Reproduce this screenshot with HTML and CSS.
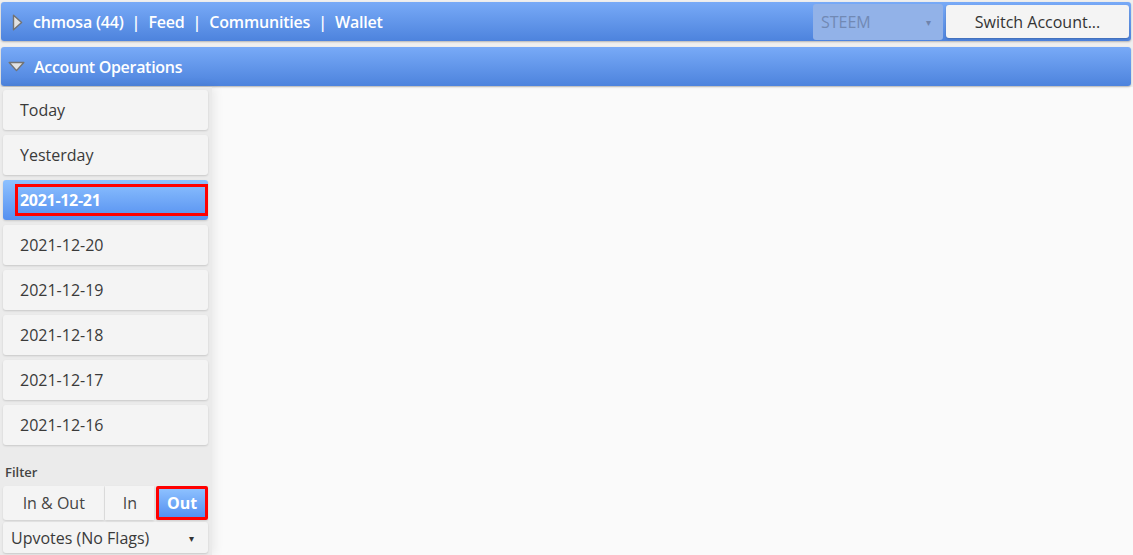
FILE: index.html
```html
<!DOCTYPE html>
<html>
<head>
<meta charset="utf-8">
<link rel="stylesheet" href="styles.css">
</head>
<body>
<div class="topwrap">
  <div class="bar bar-top">
    <div class="bar-left">
      <svg class="tri" width="11" height="17" viewBox="0 0 11 17"><path d="M1.5 1.2 L9.6 8.5 L1.5 15.8 Z" fill="#e2e2e2" stroke="#737373" stroke-width="1.4" stroke-linejoin="round"/></svg>
      <span class="nav">chmosa (44)</span><span class="sep">|</span><span class="nav">Feed</span><span class="sep">|</span><span class="nav">Communities</span><span class="sep">|</span><span class="nav">Wallet</span>
    </div>
    <div class="bar-right">
      <div class="chain"><span>STEEM</span><span class="chain-arrow">▾</span></div>
      <div class="switch">Switch Account...</div>
    </div>
  </div>
  <div class="bar bar-ops">
    <svg class="tri-down" width="17" height="11" viewBox="0 0 17 11"><path d="M1.2 1.5 L15.8 1.5 L8.5 9.6 Z" fill="#e2e2e2" stroke="#737373" stroke-width="1.4" stroke-linejoin="round"/></svg>
    <span class="nav">Account Operations</span>
  </div>
</div>
<div class="main">
  <div class="sidebar">
    <div class="days">
      <div class="day">Today</div>
      <div class="day">Yesterday</div>
      <div class="day day-sel"><span class="mark">2021-12-21</span></div>
      <div class="day">2021-12-20</div>
      <div class="day">2021-12-19</div>
      <div class="day">2021-12-18</div>
      <div class="day">2021-12-17</div>
      <div class="day">2021-12-16</div>
    </div>
    <div class="filter-label">Filter</div>
    <div class="seg">
      <div class="seg-btn seg-a">In &amp; Out</div>
      <div class="seg-btn seg-b">In</div>
      <div class="seg-btn seg-c seg-sel">Out</div>
    </div>
    <div class="select"><span>Upvotes (No Flags)</span><span class="sel-arrow">▾</span></div>
  </div>
  <div class="content"></div>
</div>
</body>
</html>
```
FILE: styles.css
```css
* { box-sizing: border-box; }
html, body { height: 100%; }
body {
  margin: 0;
  background: #fafafa;
  font-family: "Open Sans", "Noto Sans", sans-serif;
  color: #333;
  overflow: hidden;
}
.topwrap {
  background: #efefef;
  padding: 2px 2px 1px 1px;
}
.bar {
  height: 39px;
  border-radius: 3px;
  background: linear-gradient(#78aaf7, #4d83dd);
  box-shadow: 0 1px 2px rgba(0,0,0,0.25);
  display: flex;
  align-items: center;
  color: #fff;
  font-weight: 600;
  font-size: 16px;
}
.bar-top {
  justify-content: space-between;
  padding-left: 11px;
  padding-right: 2px;
}
.bar-left { display: flex; align-items: center; }
.tri { margin-right: 10px; margin-top: 1px; }
.nav { letter-spacing: -0.2px; }
.sep { margin: 0 8px; font-weight: 600; }
.bar-ops .nav { letter-spacing: -0.3px; }
.bar-right { display: flex; align-items: center; gap: 3px; height: 100%; }
.chain {
  width: 130px;
  height: 36px;
  background: #92b2e8;
  border-radius: 3px;
  display: flex;
  align-items: center;
  justify-content: space-between;
  padding: 0 12px 0 8px;
  color: #7189b4;
  font-weight: 400;
  font-size: 16px;
}
.chain-arrow { font-size: 10px; color: #6e83ad; }
.switch {
  width: 183px;
  height: 33px;
  background: #f4f4f4;
  border-radius: 3px;
  box-shadow: 0 1px 2px rgba(0,0,0,0.2);
  color: #333;
  font-weight: 400;
  font-size: 16px;
  display: flex;
  align-items: center;
  justify-content: center;
}
.bar-ops {
  margin-top: 6px;
  padding-left: 7px;
}
.tri-down { margin-right: 9px; }
.main {
  display: flex;
  height: calc(100% - 87px);
}
.sidebar {
  width: 212px;
  flex: none;
  background: #ebebeb;
  box-shadow: 2px 0 10px rgba(0,0,0,0.08);
  padding: 3px 4px 0 3px;
}
.days { display: flex; flex-direction: column; gap: 5px; }
.day {
  height: 40px;
  background: #f4f4f4;
  border-radius: 3px;
  box-shadow: 0 1px 2px rgba(0,0,0,0.15);
  display: flex;
  align-items: center;
  padding-left: 17px;
  font-size: 16px;
  color: #3a3a3a;
}
.day-sel {
  background: linear-gradient(#8dc1ff, #5590f0);
  color: #fff;
  font-weight: 700;
  padding-left: 12px;
}
.mark {
  border: 3px solid #ff0000;
  width: 193px;
  height: 32px;
  display: flex;
  align-items: center;
  padding-left: 2px;
  letter-spacing: -0.3px;
}
.filter-label {
  font-size: 13px;
  font-weight: 600;
  color: #444;
  margin: 18px 0 5px 2px;
}
.seg { display: flex; gap: 1px; height: 34px; }
.seg-btn {
  background: #f4f4f4;
  display: flex;
  align-items: center;
  justify-content: center;
  font-size: 16px;
  color: #444;
  box-shadow: 0 1px 2px rgba(0,0,0,0.12);
}
.seg-a { width: 102px; border-radius: 3px 0 0 3px; }
.seg-b { width: 49px; }
.seg-c { width: 52px; margin-left: 1px; border-radius: 0 3px 3px 0; }
.seg-sel {
  background: linear-gradient(#8dc1ff, #5590f0);
  color: #fff;
  font-weight: 700;
  border: 3px solid #ff0000;
  border-radius: 2px;
}
.select {
  margin-top: 2px;
  height: 31px;
  background: #f4f4f4;
  border-radius: 3px;
  box-shadow: 0 1px 2px rgba(0,0,0,0.15);
  display: flex;
  align-items: center;
  justify-content: space-between;
  padding: 0 14px 0 8px;
  font-size: 16px;
  color: #3a3a3a;
}
.sel-arrow { font-size: 10px; color: #333; }
.content { flex: 1; }
```
